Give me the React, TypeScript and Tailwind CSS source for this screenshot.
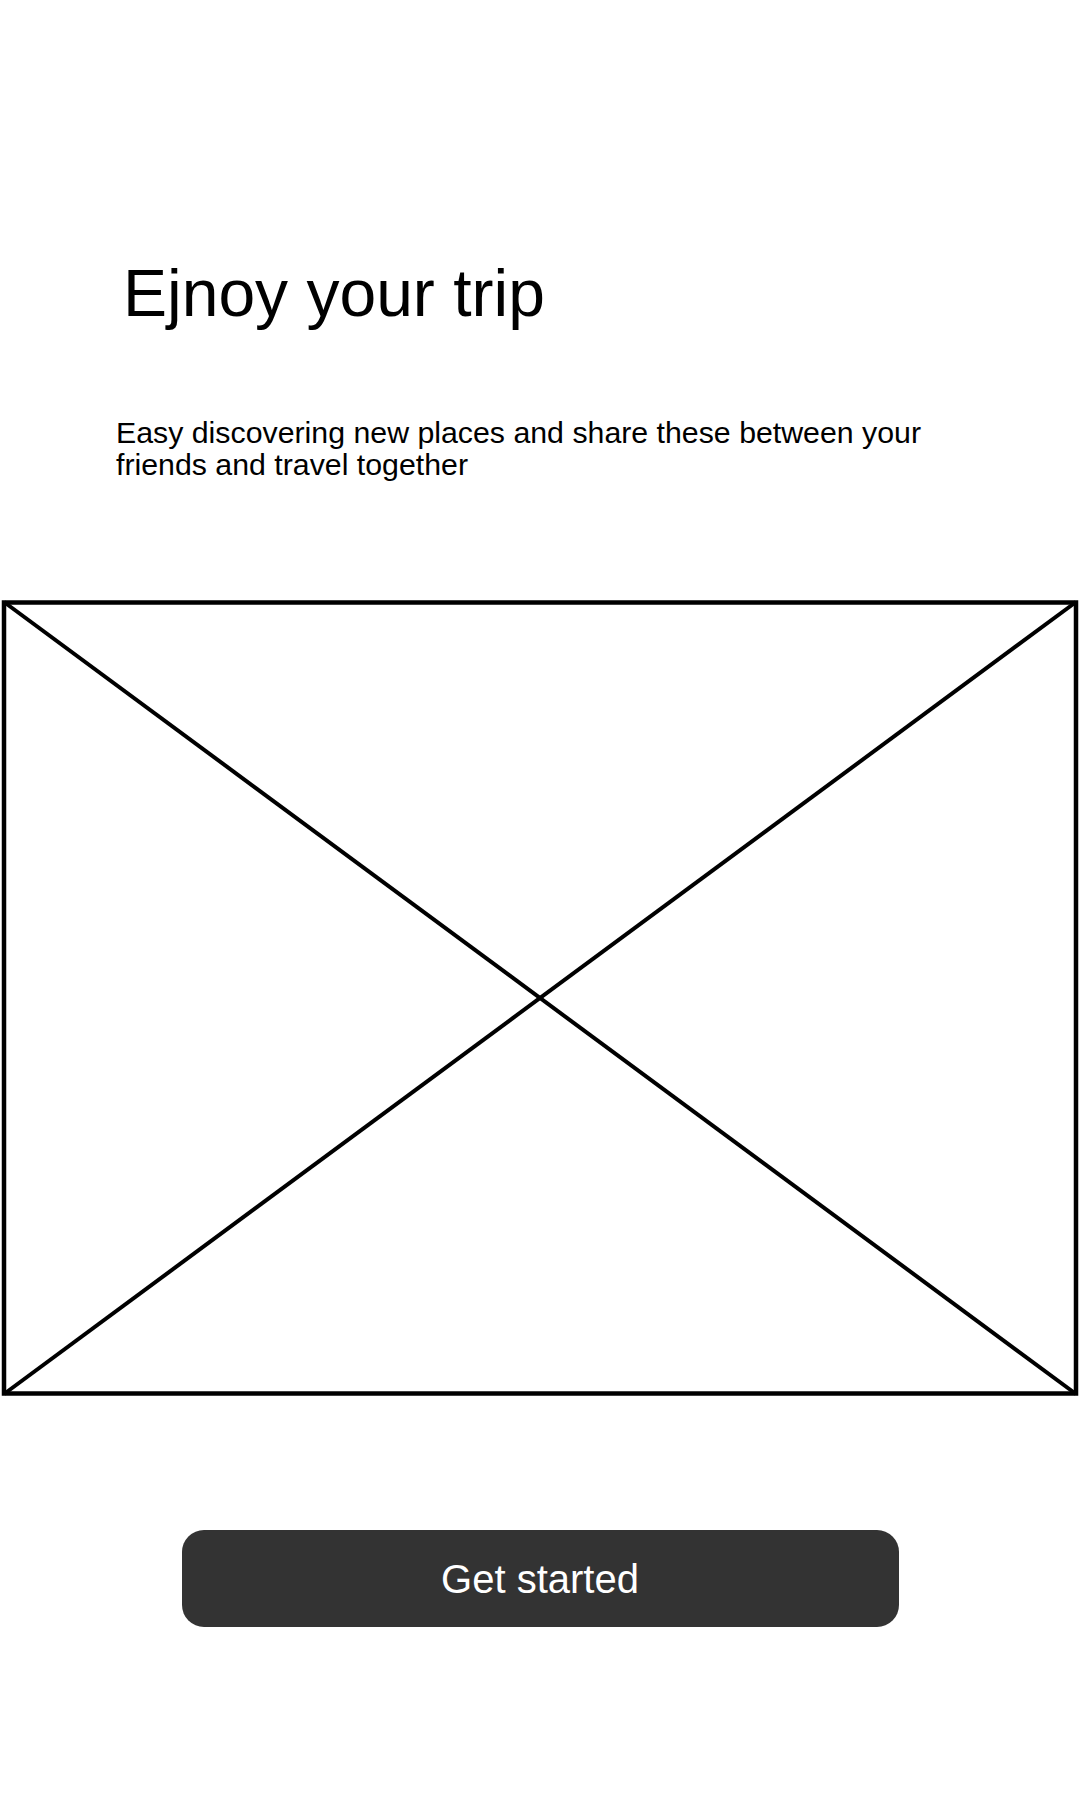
export default function App() {
  return (
    <div className="w-[1080px] h-[1800px] bg-white flex flex-col font-['Liberation_Sans',Arial,sans-serif] text-black">
      <h1 className="pl-[123px] pt-[260px] text-[66px] leading-none font-normal">Ejnoy your trip</h1>

      <p className="pl-[116px] mt-[91px] max-w-[960px] text-[30.3px] leading-[32px]">
        Easy discovering new places and share these between your
        <br />
        friends and travel together
      </p>

      {/* image placeholder */}
      <svg className="mt-[119px] block" width="1080" height="796" viewBox="0 0 1080 796" fill="none">
        <rect x="4" y="2.5" width="1072" height="791" stroke="#000" strokeWidth="4.5" />
        <line x1="4" y1="2" x2="1076" y2="794" stroke="#000" strokeWidth="4" />
        <line x1="4" y1="794" x2="1076" y2="2" stroke="#000" strokeWidth="4" />
      </svg>

      <button className="mt-[134px] mx-auto w-[717px] h-[97px] rounded-[22px] bg-[#333333] text-white text-[40px] leading-none">
        Get started
      </button>
    </div>
  );
}
